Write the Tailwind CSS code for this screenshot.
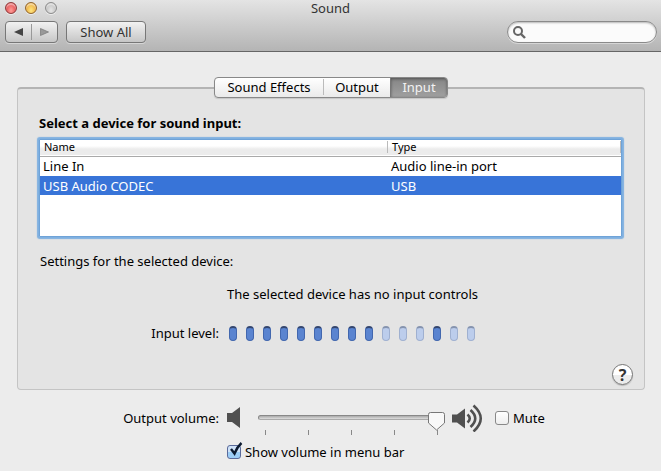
<!DOCTYPE html>
<html lang="en">
<head>
  <meta charset="UTF-8" />
  <meta name="viewport" content="width=device-width, initial-scale=1.0"/>
  <title>Sound</title>
  <script src="https://cdn.jsdelivr.net/npm/@tailwindcss/browser@4"></script>
</head>
<body class="min-h-screen bg-[#ececec] font-['Noto_Sans','Open_Sans',sans-serif] text-[13px] leading-4 text-black">

  <!-- Title bar and toolbar -->
  <header class="border-b border-[#666] bg-linear-to-b from-[#e4e4e4] to-[#b4b4b4] pb-2">
    <div class="grid h-[21px] grid-cols-[1fr_auto_1fr] items-start">
      <div class="flex gap-2 pt-[2px] pl-[5px]">
        <button aria-label="Close" class="size-3 rounded-full border border-[#8d3a3a] bg-radial-[at_50%_75%] from-[#ff9d98] to-[#d8363c] shadow-[inset_0_2px_1px_#ffffff77,0_1px_0_#ffffff88]"></button>
        <button aria-label="Minimize" class="size-3 rounded-full border border-[#91642b] bg-radial-[at_50%_75%] from-[#ffe680] to-[#e59a2c] shadow-[inset_0_2px_1px_#ffffff77,0_1px_0_#ffffff88]"></button>
        <button aria-label="Zoom" disabled class="size-3 rounded-full border border-[#8c8c8c] bg-radial-[at_50%_75%] from-[#e6e6e6] to-[#b4b4b4] shadow-[inset_0_2px_1px_#ffffff77,0_1px_0_#ffffff88]"></button>
      </div>
      <h1 class="text-[#333]">Sound</h1>
    </div>
    <div class="flex h-[22px] items-stretch pr-1 pl-[5px]">
      <div class="flex w-[53px] items-center rounded-sm border border-[#777] bg-linear-to-b from-[#f2f2f2] to-[#c6c6c6] shadow-[0_1px_0_#ffffff66]">
        <button aria-label="Back" class="flex h-4 flex-1 items-center justify-center border-r border-[#999]">
          <svg class="h-2 w-[9px]" viewBox="0 0 9 8"><path d="M9 0v8L0 4z" fill="#444"/></svg>
        </button>
        <button aria-label="Forward" class="flex h-4 flex-1 items-center justify-center">
          <svg class="h-2 w-[9px]" viewBox="0 0 9 8"><path d="M0.5 0.5v7L8.5 4z" fill="#999" stroke="#777" stroke-width=".7"/></svg>
        </button>
      </div>
      <button class="ml-2 w-20 rounded-sm border border-[#777] bg-linear-to-b from-[#f2f2f2] to-[#c6c6c6] text-[#333] shadow-[0_1px_0_#ffffff66]">Show All</button>
      <label class="relative ml-auto w-[150px]">
        <svg class="absolute top-[5px] left-[6px] size-[13px]" viewBox="0 0 13 13" fill="none" stroke="#666"><circle cx="5" cy="5" r="4" stroke-width="2"/><path d="M8 8l4 4" stroke-width="2.4"/></svg>
        <input type="search" aria-label="Search" class="h-full w-full rounded-full border border-[#8a8a8a] bg-[#fbfbfb] pr-3 pl-6 shadow-[inset_0_1px_2px_#00000044,0_1px_0_#ffffff66] outline-none"/>
      </label>
    </div>
  </header>

  <main class="pt-[25px] pr-4 pl-[17px]">
    <nav class="relative z-10 mx-auto flex h-[21px] w-[234px] overflow-hidden rounded-sm border border-[#888] bg-linear-to-b from-white to-[#eaeaea] shadow-[0_1px_1px_#00000022]">
      <button class="mt-[1px] mb-[2px] w-[109px] border-r border-[#bbb]">Sound Effects</button>
      <button class="mb-[1px] w-[66px]">Output</button>
      <button class="flex-1 border-l border-[#777] bg-linear-to-b from-[#858585] to-[#a0a0a0] pb-[1px] text-[#f2f2f2] shadow-[inset_0_1px_3px_#00000066]">Input</button>
    </nav>

    <section class="-mt-[11px] rounded-sm border border-t-2 border-[#c4c4c4] border-t-[#b4b4b4] bg-[#e4e4e4] pt-[26px] pr-[22px] pb-1 pl-[21px]">
      <h2 class="text-[13px] font-bold">Select a device for sound input:</h2>

      <div class="mt-2 h-[98px] overflow-hidden rounded-[1px] border border-[#6fa3d8] bg-white shadow-[0_0_1px_2px_#7fb0e0]">
        <table class="w-full table-fixed border-collapse text-left">
          <thead>
            <tr class="h-4 border-b border-[#aaa] bg-linear-to-b from-white from-40% to-[#ececec] to-60% text-[11px] leading-3">
              <th class="w-[347px] p-0 pt-[1px] pb-[2px] pl-1 font-normal">Name</th>
              <th class="p-0 pt-[1px] pb-[2px] font-normal"><span class="block border-x border-[#bbb] pl-1">Type</span></th>
            </tr>
          </thead>
          <tbody>
            <tr class="h-5">
              <td class="p-0 pl-[3px]">Line In</td>
              <td class="p-0 pl-1">Audio line-in port</td>
            </tr>
            <tr class="h-[19px] bg-[#3874d8] text-white">
              <td class="p-0 pl-[3px]">USB Audio CODEC</td>
              <td class="p-0 pl-1">USB</td>
            </tr>
          </tbody>
        </table>
      </div>

      <p class="mt-4 pl-[1px]">Settings for the selected device:</p>
      <p class="mt-[17px] pl-11 text-center">The selected device has no input controls</p>

      <div class="mt-[23px] flex items-center gap-[10px]">
        <span id="levelLabel" class="w-[180px] text-right">Input level:</span>
        <div id="level" role="meter" aria-labelledby="levelLabel" aria-valuemin="0" aria-valuemax="15" aria-valuenow="9" class="flex gap-[9px]"></div>
      </div>

      <div class="-mr-[11px] mt-[23px] flex justify-end">
        <button aria-label="Help" class="size-[21px] rounded-full border border-[#777] bg-linear-to-b from-white from-50% to-[#ececec] to-50% text-[16px] leading-4 font-bold text-[#333] shadow-[0_1px_1px_#00000033]">?</button>
      </div>
    </section>

    <div class="mx-auto mt-4 grid w-fit grid-cols-[auto_auto] gap-x-2 pl-[6px]">
      <label for="volume" class="pt-1 text-right">Output volume:</label>
      <div class="flex h-[38px] items-start">
        <svg class="mt-[1px] h-[21px] w-[13px]" viewBox="0 0 13 21" fill="#505050"><path d="M0 6h5L13 0v21L5 15H0z"/></svg>
        <div class="relative ml-[18px] w-[187px]">
          <input id="volume" type="range" min="0" max="100" value="100" class="mt-[9px] block h-[5px] w-full appearance-none rounded-full border border-[#888] border-b-[#aaa] bg-linear-to-b from-[#aaa] to-[#ddd] [&::-webkit-slider-thumb]:h-4 [&::-webkit-slider-thumb]:w-4 [&::-webkit-slider-thumb]:appearance-none"/>
          <svg id="thumb" class="pointer-events-none absolute top-[6px] right-0 h-[19px] w-[17px]" viewBox="0 0 17 19"><path d="M2.5.5h12q2 0 2 2V11L8.5 18 .5 11V2.500q0-2 2-2z" fill="#f8f8f8" stroke="#777"/></svg>
          <div class="mt-[10px] flex justify-between px-[7px]">
            <i class="h-[5px] w-px bg-[#888]"></i><i class="h-[5px] w-px bg-[#888]"></i><i class="h-[5px] w-px bg-[#888]"></i><i class="h-[5px] w-px bg-[#888]"></i><i class="h-[5px] w-px bg-[#888]"></i>
          </div>
        </div>
        <svg class="-mt-[2px] ml-[7px] h-7 w-[31px]" viewBox="0 0 31 28" fill="none" stroke="#505050" stroke-width="2.600">
          <path d="M0 10.500h5l8-6v20l-8-6H0z" fill="#505050" stroke="none"/>
          <path d="M15.500 10.500q4.500 4 0 8M18.500 6q9.500 8.500 0 17M21.500 1.500q14.500 13 0 26"/>
        </svg>
        <label class="ml-3 flex items-center gap-1 pt-1">
          <input type="checkbox" class="size-[14px] appearance-none rounded-[3px] border border-[#888] bg-linear-to-b from-white to-[#eee]"/>
          Mute
        </label>
      </div>
      <label class="relative col-start-2 flex items-center gap-1 justify-self-start">
        <input type="checkbox" checked class="peer size-[14px] appearance-none rounded-[3px] border border-[#5a6a9a] bg-linear-to-b from-[#cfe2f8] from-50% to-[#9ccdf6] to-50%"/>
        <svg class="absolute -top-[2px] left-[2px] hidden h-[14px] w-[14px] peer-checked:block" viewBox="0 0 14 14" fill="none" stroke="#0c1a30" stroke-width="2.400"><path d="M2 7l3.500 4.500Q8 5 12.500 1"/></svg>
        Show volume in menu bar
      </label>
    </div>
  </main>

  <script>
    // 1 = lit segment; the lone one near the end is the peak hold
    const segments = [1, 1, 1, 1, 1, 1, 1, 1, 1, 0, 0, 0, 1, 0, 0];

    document.getElementById('level').innerHTML = segments.map(on => on
      ? '<span class="h-[15px] w-2 rounded-full border border-[#4267ae] border-t-2 border-t-[#34466e] bg-[#5a84d0]"></span>'
      : '<span class="h-[15px] w-2 rounded-full border border-[#9fb0d0] border-t-2 border-t-[#8593ae] bg-[#bccdec]"></span>'
    ).join('');

    const volume = document.getElementById('volume');
    volume.addEventListener('input', () => {
      document.getElementById('thumb').style.right = (100 - volume.value) * 1.7 + 'px';
    });
  </script>
</body>
</html>
